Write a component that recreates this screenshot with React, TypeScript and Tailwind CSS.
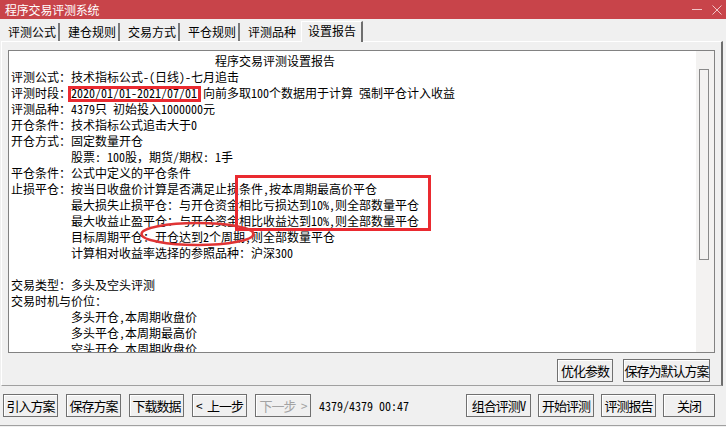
import React from "react";

const FONT = "font-['Noto_Sans_CJK_SC',sans-serif]";

function Btn({ children, w, disabled }: { children: React.ReactNode; w: string; disabled?: boolean }) {
  return (
    <div
      className={`${w} h-[23px] shrink-0 border border-[#707070] bg-[#f0f0f0] shadow-[inset_1px_1px_0_#ffffff] flex items-center justify-center text-[13px] tracking-[-1px] whitespace-pre ${
        disabled ? "text-[#a3a3a3]" : "text-black"
      }`}
    >
      {children}
    </div>
  );
}

function Line({ label, children, indent }: { label?: string; children?: React.ReactNode; indent?: boolean }) {
  return (
    <div className="h-[16px] flex whitespace-pre">
      {indent ? <span className="w-[60px] shrink-0" /> : label ? <span className="w-[60px] shrink-0">{label}</span> : null}
      <span>{children}</span>
    </div>
  );
}

export default function App() {
  const tabs = ["评测公式", "建仓规则", "交易方式", "平仓规则"];
  return (
    <div className={`w-[726px] h-[427px] bg-[#f0f0f0] flex flex-col overflow-hidden ${FONT} [font-feature-settings:'hwid']`}>
      {/* title bar */}
      <div className="h-[19px] bg-[#c8444a] flex items-center justify-between pl-[5px] pr-[4px] text-white text-[12px] leading-none">
        <span className="tracking-[-0.2px]">程序交易评测系统</span>
        <div className="flex items-center gap-[10px]">
          <div className="w-[10px] h-px bg-[#f1c6c8]" />
          <svg width="10" height="10" viewBox="0 0 10 10">
            <path d="M0.5 0.5 L9.5 9.5 M9.5 0.5 L0.5 9.5" stroke="#f1c6c8" strokeWidth="1" />
          </svg>
        </div>
      </div>

      {/* tabs */}
      <div className="h-[22px] flex items-end text-[12px] leading-none">
        {tabs.map((t) => (
          <div key={t} className="w-[60px] h-[18px] pl-[8px] flex items-center border-r-2 border-[#7a7a7a]">
            {t}
          </div>
        ))}
        <div className="w-[61px] h-[18px] pl-[8px] flex items-center">评测品种</div>
        <div className="relative z-10 -mb-px w-[62px] h-[21px] pl-[6px] pb-[2px] flex items-center bg-[#f0f0f0] border-l border-t border-white border-r-2 border-r-[#6e6e6e]">
          设置报告
        </div>
      </div>

      {/* panel */}
      <div className="ml-[1px] w-[722px] h-[345px] border-t border-l border-white border-r-2 border-r-[#6e6e6e] border-b border-b-[#a0a0a0] pt-[8px] pl-[6px] pr-[6px] flex flex-col">
        <div className="relative w-[707px] h-[303px] border border-[#828282] bg-white flex overflow-hidden">
          <div className="flex-1 pl-[2px] pt-[2px] text-[12px] leading-[16px] text-black overflow-hidden">
            <div className="h-[16px] pl-[204px] whitespace-pre">程序交易评测设置报告</div>
            <Line label="评测公式：">技术指标公式-(日线)-七月追击</Line>
            <Line label="评测时段：">2020/01/01-2021/07/01 向前多取100个数据用于计算 强制平仓计入收益</Line>
            <Line label="评测品种：">4379只 初始投入1000000元</Line>
            <Line label="开仓条件：">技术指标公式追击大于0</Line>
            <Line label="开仓方式：">固定数量开仓</Line>
            <Line indent>
              股票: 100股<span className="[font-feature-settings:normal]">，</span>期货/期权: 1手
            </Line>
            <Line label="平仓条件：">公式中定义的平仓条件</Line>
            <Line label="止损平仓：">按当日收盘价计算是否满足止损条件,按本周期最高价平仓</Line>
            <Line indent>最大损失止损平仓：与开仓资金相比亏损达到10%,则全部数量平仓</Line>
            <Line indent>最大收益止盈平仓：与开仓资金相比收益达到10%,则全部数量平仓</Line>
            <Line indent>目标周期平仓：开仓达到2个周期,则全部数量平仓</Line>
            <Line indent>计算相对收益率选择的参照品种：沪深300</Line>
            <div className="h-[16px]" />
            <Line label="交易类型：">多头及空头评测</Line>
            <div className="h-[16px] whitespace-pre">交易时机与价位：</div>
            <Line indent>多头开仓,本周期收盘价</Line>
            <Line indent>多头平仓,本周期最高价</Line>
            <Line indent>空头开仓,本周期收盘价</Line>
          </div>
          {/* scrollbar */}
          <div className="w-[18px] shrink-0 bg-[#f3f2f1] pt-[18px] pl-[3px]">
            <div className="w-[10px] h-[191px] border border-[#8a8a8a] bg-[#f3f2f1]" />
          </div>

          {/* annotations */}
          <div className="absolute left-[59px] top-[35px] w-[133px] h-[16px] border-[3px] border-[#ea2a30]" />
          <div className="absolute left-[226px] top-[124px] w-[196px] h-[56px] border-[3px] border-[#ea2a30]" />
          <svg className="absolute left-[128px] top-[168px]" width="122" height="30" viewBox="0 0 122 30">
            <ellipse cx="60.5" cy="15" rx="56" ry="11" fill="none" stroke="#e03434" strokeWidth="2.5" />
          </svg>
        </div>
        <div className="mt-[6px] flex justify-end gap-[10px] pr-[5px]">
          <Btn w="w-[56px]">优化参数</Btn>
          <Btn w="w-[87px]">保存为默认方案</Btn>
        </div>
      </div>

      {/* bottom bar */}
      <div className="h-[40px] border-b border-[#a0a0a0] pt-[8px] flex items-start text-[12px]">
        <div className="ml-[3px] flex items-center gap-[8px]">
          <Btn w="w-[55px]">引入方案</Btn>
          <Btn w="w-[55px]">保存方案</Btn>
          <Btn w="w-[55px]">下载数据</Btn>
          <Btn w="w-[55px]">{"< 上一步"}</Btn>
          <Btn w="w-[56px]" disabled>{"下一步 >"}</Btn>
          <span className="h-[23px] flex items-center text-[12px] whitespace-pre">4379/4379 00:47</span>
        </div>
        <div className="ml-auto mr-[11px] flex items-center gap-[7px]">
          <Btn w="w-[65px]">组合评测V</Btn>
          <Btn w="w-[56px]">开始评测</Btn>
          <Btn w="w-[55px]">评测报告</Btn>
          <Btn w="w-[52px]">关闭</Btn>
        </div>
      </div>
    </div>
  );
}
